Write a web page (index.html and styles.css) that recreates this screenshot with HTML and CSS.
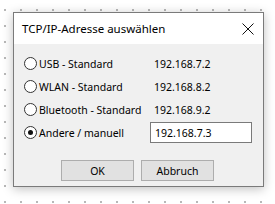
FILE: index.html
```html
<!DOCTYPE html>
<html>
<head>
<meta charset="utf-8">
<link rel="stylesheet" href="styles.css">
</head>
<body>
<div class="dialog">
  <div class="titlebar">
    <span class="title">TCP/IP-Adresse auswählen</span>
    <svg class="close" width="12" height="12" viewBox="0 0 12 12"><path d="M0.5 0.5 L11.5 11.5 M11.5 0.5 L0.5 11.5" stroke="#111" stroke-width="1" fill="none"/></svg>
  </div>
  <div class="client">
    <div class="row">
      <span class="radio"></span><span class="label">USB - Standard</span><span class="ip">192.168.7.2</span>
    </div>
    <div class="row">
      <span class="radio"></span><span class="label">WLAN - Standard</span><span class="ip">192.168.8.2</span>
    </div>
    <div class="row">
      <span class="radio"></span><span class="label">Bluetooth - Standard</span><span class="ip">192.168.9.2</span>
    </div>
    <div class="row">
      <span class="radio checked"></span><span class="label">Andere / manuell</span><span class="input">192.168.7.3</span>
    </div>
    <div class="buttons">
      <span class="btn">OK</span><span class="btn">Abbruch</span>
    </div>
  </div>
</div>
</body>
</html>
```
FILE: styles.css
```css
html, body { margin: 0; padding: 0; }
body {
  width: 275px; height: 204px; overflow: hidden;
  background-color: #fff;
  background-image: radial-gradient(circle, #b8b8b8 0.8px, transparent 1.2px);
  background-size: 16px 16px;
  background-position: -3px 2px;
  font-family: "Noto Sans", "DejaVu Sans", sans-serif;
  font-size: 10.5px;
  color: #000;
  padding: 12px 0 0 13px;
  box-sizing: border-box;
}
.dialog {
  width: 251px; height: 175px;
  box-sizing: border-box;
  border: 1px solid #7a7a7a;
  background: #f0f0f0;
  box-shadow: 0 2px 10px rgba(0,0,0,0.25);
  display: flex; flex-direction: column;
}
.titlebar {
  height: 31px; background: #fff;
  display: flex; align-items: center; justify-content: space-between;
  padding: 0 9px 0 8px;
}
.title { font-size: 11.5px; }
.client { padding: 8px 0 0 10px; display: flex; flex-direction: column; }
.row { display: flex; align-items: center; height: 23px; }
.radio {
  width: 11px; height: 11px; border: 1px solid #333; border-radius: 50%;
  background: #fff; margin-right: 2px; position: relative; flex: none;
}
.radio.checked::after {
  content: ""; position: absolute; left: 3px; top: 3px; width: 5px; height: 5px;
  border-radius: 50%; background: #111;
}
.label { width: 112px; }
.ip { padding-left: 3px; }
.input {
  width: 102px; height: 21px; box-sizing: border-box; border: 1px solid #7a7a7a;
  background: #fff; padding: 1px 0 0 4px; display: flex; align-items: center;
  margin-left: -1px;
}
.buttons { display: flex; gap: 7px; padding: 16px 0 0 37px; }
.btn {
  width: 73px; height: 21px; box-sizing: border-box; border: 1px solid #adadad;
  background: #e1e1e1; display: flex; align-items: center; justify-content: center;
}
```
